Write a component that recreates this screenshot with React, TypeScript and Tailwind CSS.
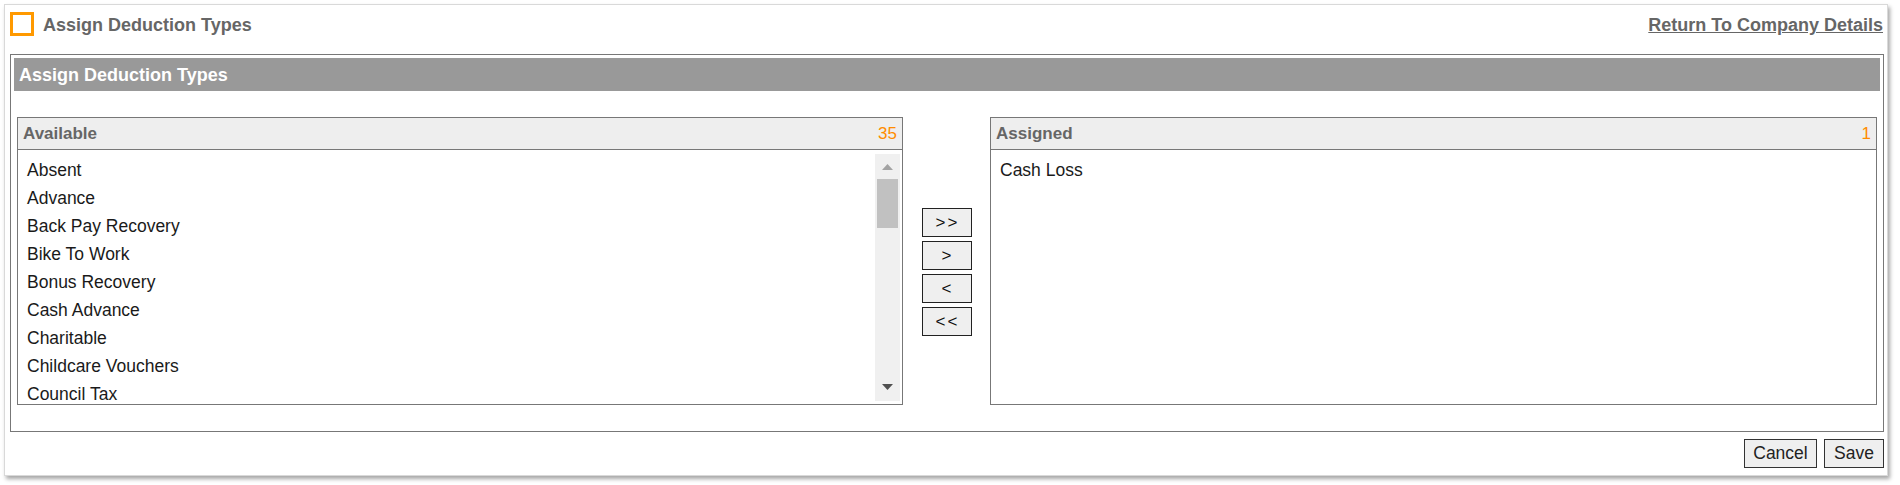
const available = [
  "Absent",
  "Advance",
  "Back Pay Recovery",
  "Bike To Work",
  "Bonus Recovery",
  "Cash Advance",
  "Charitable",
  "Childcare Vouchers",
  "Council Tax",
];

const assigned = ["Cash Loss"];

function ListPanel({ title, count, items, scroll }: { title: string; count: number; items: string[]; scroll?: boolean }) {
  return (
    <section className="flex flex-col h-full border border-[#777] bg-white">
      <div className="h-[32px] shrink-0 flex items-center justify-between bg-[#eeeeee] border-b border-[#777] pl-[5px] pr-[5px]">
        <span className="font-bold text-[17px] text-[#666]">{title}</span>
        <span className="text-[17px] text-[#ff8c00]">{count}</span>
      </div>
      <div className="relative flex-1 overflow-hidden pl-[9px] pt-[6px]">
        {items.map((item) => (
          <div key={item} className="leading-[28px] text-[17.5px] text-[#1a1a1a]">
            {item}
          </div>
        ))}
        {scroll && (
          <div className="absolute right-[2px] top-[4px] bottom-[3px] w-[25px] bg-[#f0f0f0]">
            <svg className="absolute left-[7px] top-[10px]" width="11" height="6" viewBox="0 0 11 6">
              <path d="M0 6 L5.5 0 L11 6 Z" fill="#a3a3a3" />
            </svg>
            <div className="absolute left-[2px] right-[2px] top-[25px] h-[49px] bg-[#c1c1c1]" />
            <svg className="absolute left-[7px] bottom-[11px]" width="11" height="6" viewBox="0 0 11 6">
              <path d="M0 0 L11 0 L5.5 6 Z" fill="#505050" />
            </svg>
          </div>
        )}
      </div>
    </section>
  );
}

function MoveButton({ label }: { label: string }) {
  return (
    <button className="w-[50px] h-[29px] border border-[#222] bg-[#efefef] text-[17px] text-[#111] leading-none tracking-[2px] pl-[2px]">
      {label}
    </button>
  );
}

export default function App() {
  return (
    <main className="w-[1900px] h-[485px] bg-white p-[4px] font-['Liberation_Sans',Arial,sans-serif]">
      <div className="w-[1884px] h-[472px] border border-[#d9d9d9] shadow-[2px_3px_4px_rgba(0,0,0,0.35)] pl-[5px] pr-[3px] flex flex-col">
        {/* title row */}
        <div className="h-[24px] mt-[7px] mb-[18px] flex items-center justify-between">
          <div className="flex items-center">
            <div className="w-[24px] h-[24px] border-[3px] border-[#ff9900]" />
            <h1 className="ml-[9px] mt-[3px] font-bold text-[18px] text-[#666]">Assign Deduction Types</h1>
          </div>
          <a href="#" className="mr-[1px] mt-[3px] font-bold text-[18px] text-[#666] underline">
            Return To Company Details
          </a>
        </div>

        {/* fieldset */}
        <div className="h-[378px] border border-[#777] p-[3px] flex flex-col">
          <div className="h-[33px] shrink-0 bg-[#999999] flex items-center pl-[5px] pt-[2px]">
            <h2 className="font-bold text-[18px] text-white">Assign Deduction Types</h2>
          </div>
          <div className="mt-[26px] h-[288px] flex px-[3px]">
            <div className="w-[886px] h-full">
              <ListPanel title="Available" count={35} items={available} scroll />
            </div>
            <div className="w-[87px] h-full flex flex-col items-center pt-[91px] gap-[4px]">
              <MoveButton label=">>" />
              <MoveButton label=">" />
              <MoveButton label="<" />
              <MoveButton label="<<" />
            </div>
            <div className="w-[887px] h-full">
              <ListPanel title="Assigned" count={1} items={assigned} />
            </div>
          </div>
        </div>

        {/* actions */}
        <div className="mt-[7px] flex justify-end gap-[7px]">
          <button className="w-[73px] h-[29px] border border-[#333] bg-[#efefef] text-[17.5px] text-[#222]">Cancel</button>
          <button className="w-[60px] h-[29px] border border-[#333] bg-[#efefef] text-[17.5px] text-[#222]">Save</button>
        </div>
      </div>
    </main>
  );
}
